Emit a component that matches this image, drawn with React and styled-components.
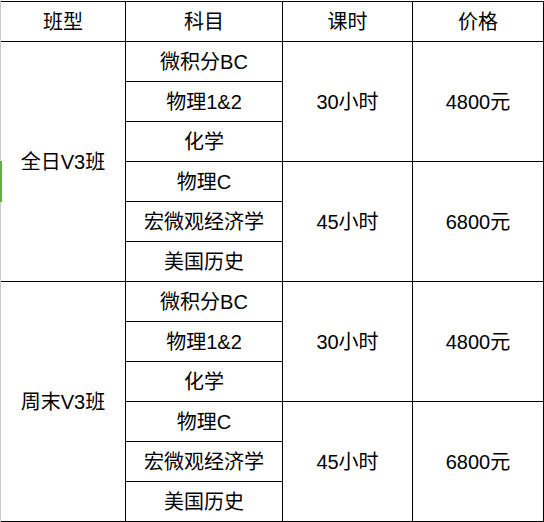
import React from 'react';
import styled, { createGlobalStyle } from 'styled-components';

const GlobalStyle = createGlobalStyle`
  html, body {
    margin: 0;
    padding: 0;
    background: #ffffff;
  }
  body {
    font-family: "Liberation Sans", "Noto Sans CJK SC", sans-serif;
  }
`;

const plans = [
  {
    name: '全日V3班',
    groups: [
      { subjects: ['微积分BC', '物理1&2', '化学'], hours: '30小时', price: '4800元' },
      { subjects: ['物理C', '宏微观经济学', '美国历史'], hours: '45小时', price: '6800元' },
    ],
  },
  {
    name: '周末V3班',
    groups: [
      { subjects: ['微积分BC', '物理1&2', '化学'], hours: '30小时', price: '4800元' },
      { subjects: ['物理C', '宏微观经济学', '美国历史'], hours: '45小时', price: '6800元' },
    ],
  },
];

const Page = styled.div`
  position: relative;
  width: 543px;
  border-left: 1px solid #c9c9c9;
  padding-top: 1px;
`;

// green selection mark on the left edge
const Marker = styled.div`
  position: absolute;
  left: -1px;
  top: 161px;
  width: 2px;
  height: 41px;
  background: #66b033;
`;

const Grid = styled.div`
  display: grid;
  grid-template-columns: 124px 156px 129px 130px;
  grid-auto-rows: 39px;
  gap: 1px;
  padding: 1px 1px 1px 0;
  background: #000000;
`;

const Cell = styled.div`
  grid-row: span ${(p) => p.$span || 1};
  background: #ffffff;
  display: flex;
  align-items: center;
  justify-content: center;
  font-size: 20px;
  line-height: 1;
  color: #000000;
  white-space: nowrap;
`;

export default function App() {
  return (
    <>
      <GlobalStyle />
      <Page>
        <Grid>
          <Cell>班型</Cell>
          <Cell>科目</Cell>
          <Cell>课时</Cell>
          <Cell>价格</Cell>
          {plans.map((plan) => (
            <React.Fragment key={plan.name}>
              <Cell $span={6}>{plan.name}</Cell>
              {plan.groups.map((g, gi) =>
                g.subjects.map((s, si) => (
                  <React.Fragment key={`${gi}-${si}`}>
                    <Cell>{s}</Cell>
                    {si === 0 && <Cell $span={3}>{g.hours}</Cell>}
                    {si === 0 && <Cell $span={3}>{g.price}</Cell>}
                  </React.Fragment>
                ))
              )}
            </React.Fragment>
          ))}
        </Grid>
        <Marker />
      </Page>
    </>
  );
}
